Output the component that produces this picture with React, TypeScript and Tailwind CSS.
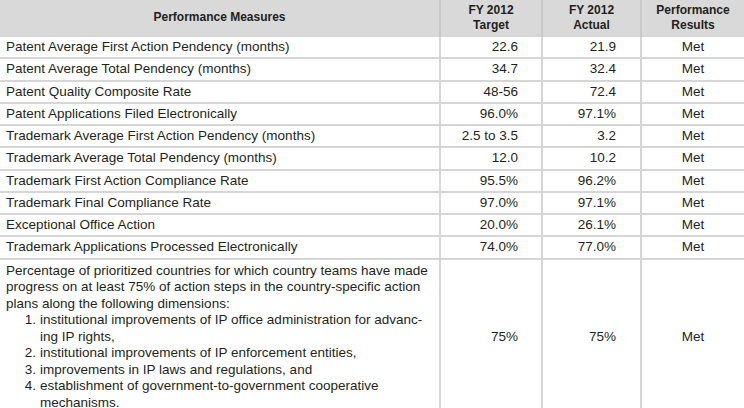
const rows: [string, string, string, string][] = [
  ['Patent Average First Action Pendency (months)', '22.6', '21.9', 'Met'],
  ['Patent Average Total Pendency (months)', '34.7', '32.4', 'Met'],
  ['Patent Quality Composite Rate', '48-56', '72.4', 'Met'],
  ['Patent Applications Filed Electronically', '96.0%', '97.1%', 'Met'],
  ['Trademark Average First Action Pendency (months)', '2.5 to 3.5', '3.2', 'Met'],
  ['Trademark Average Total Pendency (months)', '12.0', '10.2', 'Met'],
  ['Trademark First Action Compliance Rate', '95.5%', '96.2%', 'Met'],
  ['Trademark Final Compliance Rate', '97.0%', '97.1%', 'Met'],
  ['Exceptional Office Action', '20.0%', '26.1%', 'Met'],
  ['Trademark Applications Processed Electronically', '74.0%', '77.0%', 'Met'],
];

const list: [string, string[]][] = [
  ['1.', ['institutional improvements of IP office administration for advanc-', 'ing IP rights,']],
  ['2.', ['institutional improvements of IP enforcement entities,']],
  ['3.', ['improvements in IP laws and regulations, and']],
  ['4.', ['establishment of government-to-government cooperative', 'mechanisms.']],
];

export default function App() {
  return (
    <div className="w-[744px] h-[408px] overflow-hidden bg-white text-[#231f20] font-['Liberation_Sans',sans-serif] text-[13.5px]">
      <table className="w-[744px] table-fixed border-collapse">
        <colgroup>
          <col className="w-[440px]" />
          <col className="w-[102px]" />
          <col className="w-[99px]" />
          <col className="w-[103px]" />
        </colgroup>
        <thead>
          <tr className="h-[36px] bg-[#d9d9d9] text-[12px] font-bold leading-[15px]">
            <th className="text-center">Performance Measures</th>
            <th className="border-l-2 border-[#c9c9c9] text-center">
              FY 2012
              <br />
              Target
            </th>
            <th className="border-l-2 border-[#c9c9c9] text-center">
              FY 2012
              <br />
              Actual
            </th>
            <th className="border-l-2 border-[#c9c9c9] text-center">
              Performance
              <br />
              Results
            </th>
          </tr>
        </thead>
        <tbody>
          {rows.map(([name, target, actual, result]) => (
            <tr key={name} className="h-[22.2px] border-t-2 border-[#d6d6d6]">
              <td className="pl-[6px] whitespace-nowrap">{name}</td>
              <td className="border-l-2 border-[#d6d6d6] pr-[23px] text-right">{target}</td>
              <td className="border-l-2 border-[#d6d6d6] pr-[24px] text-right">{actual}</td>
              <td className="border-l-2 border-[#d6d6d6] text-center">{result}</td>
            </tr>
          ))}
          <tr className="border-t-2 border-[#d6d6d6]">
            <td className="pl-[6px] pt-[3px] pb-[4px] leading-[16.5px] align-top">
              <div className="whitespace-nowrap">Percentage of prioritized countries for which country teams have made</div>
              <div className="whitespace-nowrap">progress on at least 75% of action steps in the country-specific action</div>
              <div className="whitespace-nowrap">plans along the following dimensions:</div>
              {list.map(([num, lines]) => (
                <div key={num} className="flex">
                  <span className="w-[34px] pr-[4px] text-right">{num}</span>
                  <div>
                    {lines.map((l) => (
                      <div key={l} className="whitespace-nowrap">{l}</div>
                    ))}
                  </div>
                </div>
              ))}
            </td>
            <td className="border-l-2 border-[#d6d6d6] pr-[23px] text-right">75%</td>
            <td className="border-l-2 border-[#d6d6d6] pr-[24px] text-right">75%</td>
            <td className="border-l-2 border-[#d6d6d6] text-center">Met</td>
          </tr>
        </tbody>
      </table>
    </div>
  );
}
